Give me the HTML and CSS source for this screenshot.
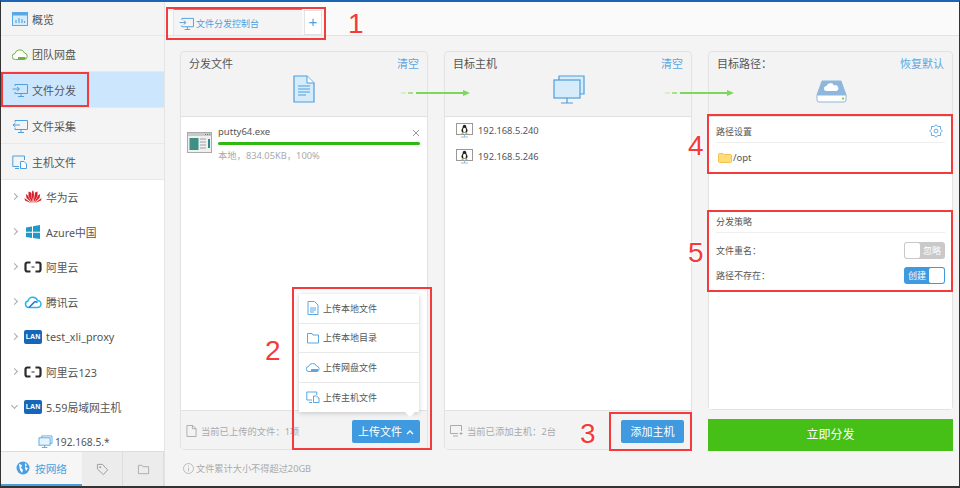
FILE: index.html
```html
<!DOCTYPE html>
<html lang="zh-CN">
<head>
<meta charset="utf-8">
<title>文件分发</title>
<link rel="stylesheet" href="styles.css">
</head>
<body>
<div class="app">
  <aside class="side">
    <nav class="menu">
      <a class="mi"><svg class="mic" viewBox="0 0 16 14"><rect x=".5" y=".5" width="15" height="13" fill="#d6ecfb" stroke="#5aa7e3"/><rect x=".5" y=".5" width="15" height="3" fill="#5aa7e3"/><path d="M4 11V8M7 11V6M10 11V7M12.500 11V9" stroke="#5aa7e3" stroke-width="1.200"/></svg><span>概览</span></a>
      <a class="mi"><svg class="mic" viewBox="0 0 16 14"><path d="M3.500 12.500a3 3 0 0 1-.5-6 5 5 0 0 1 9.500-.5 3.300 3.300 0 0 1 0 6.500z" fill="#fff" stroke="#6cb43f"/><rect x="6" y="10" width="7.500" height="2.500" fill="#6cb43f"/></svg><span>团队网盘</span></a>
      <a class="mi on"><svg class="mic" viewBox="0 0 16 14"><path d="M3 3V1.500h12.500v9H3V9M6 13.500h6M9 10.500v3" fill="none" stroke="#4f9ede"/><path d="M.5 6H7M5 4l2.500 2L5 8" fill="none" stroke="#4f9ede"/></svg><span>文件分发</span></a>
      <a class="mi"><svg class="mic" viewBox="0 0 16 14"><path d="M3 3V1.500h12.500v9H3V9M6 13.500h6M9 10.500v3" fill="none" stroke="#4f9ede"/><path d="M8 6H1M3.500 4L1 6l2.500 2" fill="none" stroke="#4f9ede"/></svg><span>文件采集</span></a>
      <a class="mi"><svg class="mic" viewBox="0 0 16 14"><path d="M7 11.500H.8V1h11.700v4M3 13.500h4" fill="none" stroke="#4f9ede"/><path d="M8.500 6.500h3.500l2.500 2.500v4.500h-6z" fill="#fff" stroke="#4f9ede"/></svg><span>主机文件</span></a>
    </nav>
    <ul class="tree">
      <li class="ti"><i class="chev"></i><svg class="tic" viewBox="0 0 18 14"><g fill="#d9202a"><path d="M9 13L7.500 4 8.500.5 9.500 1 10 5z"/><path d="M8.500 13L4.500 6 4.500 1.500 7 2.500z"/><path d="M9.500 13L13.500 6l0-4.500L11 2.500z"/><path d="M8 13L2.500 8 1.800 4l2 1.500z"/><path d="M10 13l5.500-5 .7-4-2 1.500z"/><path d="M7.500 13.200L1 10.500.5 8z"/><path d="M10.500 13.200L17 10.500 17.500 8z"/></g></svg><span>华为云</span></li>
      <li class="ti"><i class="chev"></i><svg class="tic" viewBox="0 0 18 14"><path d="M2 2.500l6-1v5.300H2zM9 1.300l7-1.200v6.700H9zM2 7.700h6V13l-6-1zM9 7.700h7v6.200l-7-1z" fill="#1e9ac9"/></svg><span>Azure中国</span></li>
      <li class="ti"><i class="chev"></i><svg class="tic" viewBox="0 0 18 14"><path d="M6.500 2.500H3.500Q1.500 2.500 1.500 4.500v5Q1.500 11.500 3.500 11.500h3M11.500 2.500h3q2 0 2 2v5q0 2-2 2h-3" fill="none" stroke="#2b2b2b" stroke-width="2.200"/><path d="M7.500 7h3" stroke="#2b2b2b"/></svg><span>阿里云</span></li>
      <li class="ti"><i class="chev"></i><svg class="tic" viewBox="0 0 18 14"><path d="M5 12.500a3.300 3.300 0 0 1-1-6.500 5 5 0 0 1 9.500-.5 3.500 3.500 0 0 1 0 7z" fill="none" stroke="#2ab4e8" stroke-width="1.500"/><path d="M5 12.500L10.500 7a3 3 0 0 1 3 .5" fill="none" stroke="#2671d9" stroke-width="1.500"/></svg><span>腾讯云</span></li>
      <li class="ti"><i class="chev"></i><b class="lan">LAN</b><span>test_xli_proxy</span></li>
      <li class="ti"><i class="chev"></i><svg class="tic" viewBox="0 0 18 14"><path d="M6.500 2.500H3.500Q1.500 2.500 1.500 4.500v5Q1.500 11.500 3.500 11.500h3M11.500 2.500h3q2 0 2 2v5q0 2-2 2h-3" fill="none" stroke="#2b2b2b" stroke-width="2.200"/><path d="M7.500 7h3" stroke="#2b2b2b"/></svg><span>阿里云123</span></li>
      <li class="ti"><i class="chev open"></i><b class="lan">LAN</b><span>5.59局域网主机</span></li>
      <li class="ti sub"><svg class="hostic" viewBox="0 0 16 14"><path d="M4 3V1h11v8h-2" fill="none" stroke="#5aa7e3"/><rect x="1" y="3" width="12" height="8" fill="#e6f3fc" stroke="#5aa7e3"/><path d="M4 13.500h6M7 11v2.500" stroke="#5aa7e3"/></svg><span>192.168.5.*</span></li>
    </ul>
    <div class="stabs">
      <a class="st on"><svg class="globe" viewBox="0 0 14 14"><circle cx="7" cy="7" r="6.500" fill="#4a9fe0"/><path d="M3 3l3 1-1 3 2 2-1 3-2-3zM9 2l2 2-2 2 3 1-2 3-1-3z" fill="#fff"/></svg><span>按网络</span></a>
      <a class="st"><svg class="sti" viewBox="0 0 14 14"><path d="M1.500 1.500H7l5.500 6-4.500 5L1.500 6.500z" fill="none" stroke="#999"/><circle cx="4.500" cy="4.500" r="1" fill="#999"/></svg></a>
      <a class="st"><svg class="sti" viewBox="0 0 14 14"><path d="M1.500 2.500h4l1 1.500h6v7.500h-11z" fill="none" stroke="#aaa"/></svg></a>
    </div>
  </aside>

  <main class="main">
    <div class="tabbar">
      <div class="tab"><svg class="tabic" viewBox="0 0 16 14"><path d="M3 3V1.500h12.500v9H3V9M6 13.500h6M9 10.500v3" fill="none" stroke="#4f9ede"/><path d="M.5 6H7M5 4l2.500 2L5 8" fill="none" stroke="#4f9ede"/></svg><span>文件分发控制台</span></div>
      <div class="plus">+</div>
    </div>
    <div class="cols">
      <section class="panel">
        <header class="phead">
          <div class="ptop"><h2>分发文件</h2><a class="clr">清空</a></div>
          <svg class="bigic docic" viewBox="0 0 22 28"><path d="M1 1h13l7 7v19H1z" fill="#d6ecfb" stroke="#4f9ede" stroke-width="1.200"/><path d="M14 1v7h7" fill="#fff" stroke="#4f9ede"/><path d="M5 11h12M5 14h12M5 17h12M5 20h8" stroke="#4f9ede" stroke-width="1.100"/></svg>
          <div class="flow"><i class="d1"></i><i class="d2"></i><i class="ln"></i><i class="ar"></i></div>
        </header>
        <div class="pbody filebody">
          <div class="file">
            <svg class="fic" viewBox="0 0 25 21"><rect x=".5" y=".5" width="24" height="20" fill="#f0f0f0" stroke="#aaa"/><rect x="1" y="1" width="23" height="3" fill="#c9c9c9"/><path d="M18 2.500h5" stroke="#777" stroke-dasharray="1 1"/><rect x="2.500" y="6" width="9" height="12" fill="#3f8f85"/><path d="M13 7h6M13 10h6M13 13h6M13 16h6" stroke="#bbb" stroke-width="1.500"/><rect x="21" y="7" width="2" height="9" fill="#2e8b8b"/></svg>
            <div class="finfo">
              <div class="fname">putty64.exe</div>
              <div class="bar"></div>
              <div class="fmeta">本地，834.05KB，100%</div>
            </div>
            <svg class="fx" viewBox="0 0 8 8"><path d="M1 1l6 6M7 1L1 7" stroke="#999"/></svg>
          </div>
        </div>
        <footer class="pfoot">
          <svg class="fti" viewBox="0 0 12 13"><path d="M1 .5h6.500L11 4v8.500H1z" fill="none" stroke="#aaa"/><path d="M7 .5V4h4" fill="none" stroke="#aaa"/></svg>
          <span class="ftxt">当前已上传的文件：1项</span>
          <a class="btn upbtn">上传文件 <svg class="caret" viewBox="0 0 8 5"><path d="M1 4l3-3 3 3" fill="none" stroke="#fff" stroke-width="1.300"/></svg></a>
        </footer>
        <div class="drop">
          <a class="dr"><svg class="dri" viewBox="0 0 14 14"><path d="M2 .5h6.500L12 4v9.500H2z" fill="#fff" stroke="#5aa7e3"/><path d="M4 7h6M4 9h6M4 11h4" stroke="#5aa7e3"/></svg><span>上传本地文件</span></a>
          <a class="dr"><svg class="dri" viewBox="0 0 14 14"><path d="M1.500 2.500H6l1 1.500h5.500v8h-11z" fill="#fff" stroke="#5aa7e3"/></svg><span>上传本地目录</span></a>
          <a class="dr"><svg class="dri" viewBox="0 0 14 14"><path d="M3 11.500a2.500 2.500 0 0 1-.5-5 4.300 4.300 0 0 1 8-.5 2.800 2.800 0 0 1 .5 5.500z" fill="#fff" stroke="#5aa7e3"/><rect x="5" y="9" width="7" height="2.500" fill="#5aa7e3"/></svg><span>上传网盘文件</span></a>
          <a class="dr"><svg class="dri" viewBox="0 0 14 14"><path d="M6 10H.8V2h10v3M3 12.500h3" fill="none" stroke="#5aa7e3"/><path d="M7.500 6h3L13 8v4.500H7.500z" fill="#fff" stroke="#5aa7e3"/></svg><span>上传主机文件</span></a>
        </div>
      </section>

      <section class="panel">
        <header class="phead">
          <div class="ptop"><h2>目标主机</h2><a class="clr">清空</a></div>
          <svg class="bigic hostbig" viewBox="0 0 32 29"><path d="M6 5V1h25v18h-4" fill="#d6ecfb" stroke="#4f9ede" stroke-width="1.200"/><rect x="1" y="5" width="26" height="18" fill="#d6ecfb" stroke="#4f9ede" stroke-width="1.200"/><path d="M8 28h12M14 23v5" stroke="#4f9ede" stroke-width="1.200"/></svg>
          <div class="flow"><i class="d1"></i><i class="d2"></i><i class="ln"></i><i class="ar"></i></div>
        </header>
        <div class="pbody hosts">
          <div class="host"><svg class="lin" viewBox="0 0 17 15"><rect x=".5" y=".5" width="16" height="11" fill="#fff" stroke="#999"/><path d="M8.500 1.800c1.300 0 1.800 1 1.800 2.200 0 1.200 1.300 2.300 1.300 3.800l-.8 1.700H6.200l-.8-1.700c0-1.500 1.300-2.600 1.300-3.800 0-1.200.5-2.200 1.800-2.200z" fill="#222"/><ellipse cx="8.500" cy="7" rx="1.500" ry="2.300" fill="#fff"/><path d="M5.500 10.500h2M9.500 10.500h2" stroke="#f0a818" stroke-width="1.400"/><path d="M5 14h7M8.500 11.500V14" stroke="#8cc3ee"/></svg><span>192.168.5.240</span></div>
          <div class="host"><svg class="lin" viewBox="0 0 17 15"><rect x=".5" y=".5" width="16" height="11" fill="#fff" stroke="#999"/><path d="M8.500 1.800c1.300 0 1.800 1 1.800 2.200 0 1.200 1.300 2.300 1.300 3.800l-.8 1.700H6.200l-.8-1.700c0-1.500 1.300-2.600 1.300-3.800 0-1.200.5-2.200 1.800-2.200z" fill="#222"/><ellipse cx="8.500" cy="7" rx="1.500" ry="2.300" fill="#fff"/><path d="M5.500 10.500h2M9.500 10.500h2" stroke="#f0a818" stroke-width="1.400"/><path d="M5 14h7M8.500 11.500V14" stroke="#8cc3ee"/></svg><span>192.168.5.246</span></div>
        </div>
        <footer class="pfoot">
          <svg class="fti wide" viewBox="0 0 13 12"><path d="M8 8.500H.5V.5h11V6M3 11h5M9.500 8.500h3M11 7v3" fill="none" stroke="#aaa"/></svg>
          <span class="ftxt">当前已添加主机：2台</span>
          <a class="btn addbtn">添加主机</a>
        </footer>
      </section>

      <div class="col3">
        <section class="panel p3">
          <header class="phead">
            <div class="ptop"><h2>目标路径：</h2><a class="clr">恢复默认</a></div>
            <svg class="bigic disk" viewBox="0 0 31 23"><path d="M6 1h19l5 14H1z" fill="#8fb7de" stroke="#8fb7de"/><path d="M1 15h29v5a2 2 0 0 1-2 2H3a2 2 0 0 1-2-2z" fill="#fff" stroke="#8fb7de"/><path d="M10.500 11a2.500 2.500 0 0 1 0-5 4 4 0 0 1 7.500-.5 2.800 2.800 0 0 1 2.500 5.500z" fill="#fff"/><rect x="26" y="17.500" width="2" height="2" fill="#7fd04a"/></svg>
          </header>
          <div class="pbody p3body">
            <div class="box">
              <div class="bhead"><h3>路径设置</h3><svg class="gear" viewBox="0 0 16 16"><path d="M15.200 8L13.200 10.100 13.100 13.100 10.100 13.200 8 15.200 5.900 13.200 2.900 13.100 2.800 10.100 .8 8 2.800 5.900 2.900 2.900 5.900 2.800 8 .8 10.100 2.800 13.100 2.900 13.200 5.900z" fill="none" stroke="#4f9ede" stroke-linejoin="round"/><circle cx="8" cy="8" r="2.200" fill="none" stroke="#4f9ede"/></svg></div>
              <div class="pathrow"><svg class="folder" viewBox="0 0 14 11"><path d="M.5 2.500a1 1 0 0 1 1-1h3.500l1 1h6.500a1 1 0 0 1 1 1v6a1 1 0 0 1-1 1h-11a1 1 0 0 1-1-1z" fill="#ffdc7a" stroke="#f2c14e"/></svg><span>/opt</span></div>
            </div>
            <div class="box strat">
              <div class="bhead"><h3>分发策略</h3></div>
              <div class="sw-row"><span>文件重名：</span><div class="sw off"><i></i><em>忽略</em></div></div>
              <div class="sw-row"><span>路径不存在：</span><div class="sw onn"><em>创建</em><i></i></div></div>
            </div>
          </div>
        </section>
        <a class="go">立即分发</a>
      </div>
    </div>
    <div class="note"><svg class="info" viewBox="0 0 11 11"><circle cx="5.500" cy="5.500" r="5" fill="none" stroke="#bbb"/><path d="M5.500 2.500v1M5.500 4.800v3.500" stroke="#bbb"/></svg><span>文件累计大小不得超过20GB</span></div>
  </main>

  <i class="rb r1"></i><i class="rb r2"></i><i class="rb r3"></i><i class="rb r4"></i><i class="rb r5"></i><i class="rb r6"></i>
  <b class="num n1">1</b><b class="num n2">2</b><b class="num n3">3</b><b class="num n4">4</b><b class="num n5">5</b>
</div>
</body>
</html>
```

FILE: styles.css
```css
* { box-sizing: border-box; }
html, body { margin: 0; padding: 0; }
body { width: 960px; height: 488px; overflow: hidden; background: #fff; font-family: "Noto Sans", "Noto Sans CJK SC", sans-serif; color: #555; }
a { display: block; }
h2, h3 { margin: 0; font-weight: 400; }
ul { margin: 0; padding: 0; list-style: none; }
i, em { font-style: normal; }

.app { position: relative; display: flex; width: 960px; height: 488px; border-top: 2px solid #1b66b4; border-left: 1px solid #333; border-right: 1px solid #333; border-bottom: 2px solid #333; background: #f4f4f4; }

/* sidebar */
.side { width: 164px; flex: none; display: flex; flex-direction: column; border-right: 1px solid #e4e4e4; background: #fff; }
.menu { background: #f4f4f4; }
.mi { height: 36px; display: flex; align-items: center; padding-left: 11px; font-size: 11px; border-bottom: 1px solid #e8e8e8; color: #555; }
.mi:first-child { height: 34px; }
.mi.on { background: #cce7fd; }
.mic { width: 16px; height: 14px; margin-right: 4px; flex: none; }
.tree { flex: 1; overflow: hidden; }
.ti { height: 35px; display: flex; align-items: center; padding: 0 0 2px 11px; font-size: 10.800px; color: #555; }
.chev { width: 5px; height: 5px; margin-right: 7px; border-top: 1px solid #aaa; border-right: 1px solid #aaa; transform: rotate(45deg); flex: none; }
.chev.open { transform: rotate(135deg); margin-top: -3px; }
.tic { width: 18px; height: 14px; margin-right: 4px; flex: none; }
.lan { width: 18px; height: 14px; margin-right: 4px; flex: none; border-radius: 2px; background: #1667b9; color: #fff; font: 700 7px/14px "Liberation Sans", sans-serif; text-align: center; }
.ti.sub { padding-left: 37px; font-size: 10.200px; }
.hostic { width: 15px; height: 13px; margin-right: 2px; flex: none; }
.stabs { height: 35px; flex: none; display: flex; background: #ececec; border-top: 1px solid #ddd; }
.st { display: flex; align-items: center; justify-content: center; width: 41px; border-right: 1px solid #ddd; }
.st.on { width: 81px; background: #f6f6f6; color: #4a9fe0; font-size: 10.700px; border-bottom: 2px solid #4a9fe0; border-right: 0; }
.globe { width: 14px; height: 14px; margin-right: 5px; }
.sti { width: 13px; height: 13px; }

/* main */
.main { flex: 1; min-width: 0; display: flex; flex-direction: column; }
.tabbar { height: 34px; flex: none; display: flex; align-items: flex-end; padding-left: 8px; background: #fafafa; border-bottom: 1px solid #e2e2e2; gap: 2px; }
.tab { width: 129px; height: 27px; display: flex; align-items: center; padding: 1px 0 0 5px; background: #f4f4f4; border-top: 2px solid #4f9ede; border-left: 1px solid #e4e4e4; color: #4f9ede; font-size: 9px; }
.tabic { width: 15px; height: 13px; margin-right: 2px; }
.plus { width: 18px; height: 25px; background: #fff; border: 1px solid #e2e2e2; color: #4f9ede; font: 300 15px/22px "Liberation Sans", sans-serif; text-align: center; }
.cols { height: 399px; margin-top: 15px; display: flex; gap: 16px; padding-left: 15px; flex: none; }
.panel { position: relative; width: 248px; display: flex; flex-direction: column; border: 1px solid #e2e2e2; border-radius: 4px; background: #f3f3f3; }
.phead { position: relative; height: 65px; flex: none; border-bottom: 1px solid #e2e2e2; }
.ptop { display: flex; justify-content: space-between; padding: 4px 8px 0 8px; line-height: 15px; }
.ptop h2 { font-size: 11px; color: #555; }
.clr { font-size: 11px; color: #5ba6e0; }
.bigic { position: absolute; }
.docic { left: 112px; top: 23px; width: 22px; height: 28px; }
.hostbig { left: 108px; top: 23px; width: 32px; height: 29px; }
.disk { left: 107px; top: 28px; width: 31px; height: 23px; }
.flow { position: absolute; left: 220px; top: 38px; width: 69px; height: 7px; z-index: 2; }
.flow i { position: absolute; }
.d1 { left: 0; top: 2px; width: 5px; height: 2px; background: #d3f0c6; }
.d2 { left: 7px; top: 2px; width: 5px; height: 2px; background: #a8e08f; }
.ln { left: 15px; top: 2px; width: 48px; height: 2px; background: #7fd65c; }
.ar { left: 62px; top: 0; width: 0; height: 0; border-left: 7px solid #7fd65c; border-top: 3px solid transparent; border-bottom: 3px solid transparent; }
.pbody { flex: 1; min-height: 0; background: #fff; }
.file { position: relative; display: flex; padding: 9px 7px 0 6px; }
.fic { width: 25px; height: 21px; margin: 6px 6px 0 0; flex: none; }
.finfo { flex: 1; }
.fname { font-size: 9.500px; line-height: 12px; color: #555; }
.bar { height: 3px; margin-top: 4px; background: #2fb80f; border-radius: 2px; }
.fmeta { margin-top: 5px; font-size: 9.300px; line-height: 12px; color: #aaa; }
.fx { position: absolute; right: 7px; top: 12px; width: 8px; height: 8px; }
.pfoot { height: 39px; flex: none; display: flex; align-items: center; padding: 2px 0 0 5px; border-top: 1px solid #e2e2e2; background: #f3f3f3; color: #aaa; font-size: 9.300px; }
.fti { width: 11px; height: 12px; margin-right: 4px; flex: none; }
.fti.wide { width: 13px; }
.ftxt { flex: 1; }
.btn { height: 23px; border-radius: 2px; background: #3f9ae0; color: #fff; text-align: center; line-height: 23px; font-size: 11px; }
.upbtn { width: 68px; margin-right: 7px; }
.addbtn { width: 63px; margin-right: 7px; }
.caret { width: 8px; height: 5px; margin-left: 1px; vertical-align: 1px; }
.drop { position: absolute; left: 118px; top: 242px; width: 120px; background: #fff; box-shadow: 0 1px 5px rgba(0,0,0,.2); }
.drop::after { content: ""; position: absolute; right: 4px; bottom: -5px; width: 0; height: 0; border-top: 5px solid #fff; border-left: 5px solid transparent; border-right: 5px solid transparent; }
.dr { height: 29.500px; display: flex; align-items: center; padding-left: 7px; font-size: 9px; color: #555; border-bottom: 1px solid #e8e8e8; }
.dr:last-child { border-bottom: 0; }
.dri { width: 14px; height: 14px; margin-right: 3px; flex: none; }
.hosts { padding: 0 0 0 11px; }
.host { height: 26px; display: flex; align-items: center; font-size: 9.300px; color: #555; }
.lin { width: 17px; height: 15px; margin-right: 5px; flex: none; }

/* third column */
.col3 { width: 245px; display: flex; flex-direction: column; gap: 9px; }
.p3 { width: 245px; height: 359px; flex: none; }
.p3body { display: flex; flex-direction: column; padding: 0 7px; gap: 40px; }
.box h3 { font-size: 9px; color: #555; line-height: 14px; }
.bhead { display: flex; justify-content: space-between; align-items: center; height: 26px; padding-top: 5px; border-bottom: 1px solid #eee; }
.gear { width: 14px; height: 14px; margin: -3px 2px 0 0; }
.pathrow { display: flex; align-items: center; height: 28px; padding: 1px 0 0 2px; font-size: 9.500px; color: #555; }
.folder { width: 14px; height: 11px; margin-right: 1px; }
.strat .bhead { height: 22px; padding-top: 1px; }
.sw-row { display: flex; justify-content: space-between; align-items: center; height: 25px; font-size: 9px; color: #555; }
.strat .bhead + .sw-row { margin-top: 5px; }
.sw { display: flex; width: 41px; height: 17px; border-radius: 3px; padding: 1px; color: #fff; font-size: 9px; line-height: 15px; }
.sw i { width: 15px; height: 15px; background: #fff; border-radius: 2px; }
.sw em { flex: 1; text-align: center; }
.off { background: #c9c9c9; }
.onn { background: #3f9ae0; }
.go { height: 32px; background: #46bf17; color: #fff; text-align: center; font-size: 12px; line-height: 32px; }
.note { display: flex; align-items: center; height: 36px; padding-left: 18px; font-size: 9.200px; color: #aaa; }
.info { width: 11px; height: 11px; margin-right: 2px; }

/* annotations laid over the screenshot */
.rb { position: absolute; border: 2px solid #f33b3b; pointer-events: none; }
.r1 { left: 165px; top: 5px; width: 160px; height: 33px; }
.r2 { left: 0; top: 70px; width: 88px; height: 35px; }
.r3 { left: 291px; top: 285px; width: 140px; height: 163px; }
.r4 { left: 608px; top: 410px; width: 83px; height: 39px; }
.r5 { left: 706px; top: 112px; width: 246px; height: 60px; }
.r6 { left: 706px; top: 208px; width: 246px; height: 82px; }
.num { position: absolute; font: 400 28px/28px "Liberation Sans", sans-serif; color: #f33b3b; text-shadow: 0 0 3px #fff, 0 0 3px #fff, 0 0 3px #fff; }
.n1 { left: 347px; top: 8px; }
.n2 { left: 264px; top: 335px; }
.n3 { left: 579px; top: 418px; }
.n4 { left: 687px; top: 130px; }
.n5 { left: 687px; top: 237px; }
```
